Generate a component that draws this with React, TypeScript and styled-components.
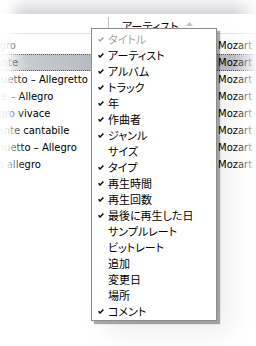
import React from 'react';
import styled, { createGlobalStyle } from 'styled-components';

const Global = createGlobalStyle`
  html, body { margin: 0; padding: 0; background: #fff; }
  body { width: 256px; height: 346px; overflow: hidden; }
`;

const Stage = styled.div`
  position: relative;
  width: 256px;
  height: 346px;
  overflow: hidden;
  background: #fff;
  font-family: "DejaVu Sans", sans-serif;
`;

const TopBand = styled.div`
  height: 14px;
  background: linear-gradient(#f5f5f7, #d6d6dc);
`;

const Header = styled.div`
  display: flex;
  height: 19px;
  border-bottom: 1px solid #e2e2e4;
`;

const HeaderBlank = styled.div`
  width: 108px;
`;

const HeaderDivider = styled.div`
  width: 1px;
  margin-top: 3px;
  background: #c4c4c4;
`;

const HeaderLabel = styled.div`
  display: flex;
  align-items: flex-start;
  padding: 6px 0 0 13px;
  font-family: "Noto Sans CJK JP", sans-serif;
  font-feature-settings: "palt";
  font-size: 11px;
  line-height: 13px;
  color: #000;
`;

const SortArrow = styled.svg`
  margin: 2px 0 0 7px;
`;

const Rows = styled.div`
  padding-top: 3px;
`;

const Row = styled.div<{ $selected?: boolean }>`
  display: grid;
  grid-template-columns: 218px 1fr;
  align-items: center;
  box-sizing: border-box;
  height: 17px;
  font-size: 10px;
  color: #000;
  background: ${p => (p.$selected ? 'linear-gradient(to right, #d0d1d6, #b9bbc2 90px, #c2c5cc)' : 'transparent')};
  border-top: 1px dotted ${p => (p.$selected ? '#555' : 'transparent')};
  border-bottom: 1px dotted ${p => (p.$selected ? '#555' : 'transparent')};
`;

const TitleCell = styled.div<{ $indent: number }>`
  overflow: hidden;
  white-space: nowrap;
  text-indent: ${p => p.$indent}px;
`;

const ArtistCell = styled.div`
  white-space: nowrap;
`;

const FadeLeft = styled.div`
  position: absolute;
  left: 0;
  top: 0;
  bottom: 0;
  width: 30px;
  z-index: 1;
  pointer-events: none;
  background: linear-gradient(
    to right,
    rgba(255, 255, 255, 0.97),
    rgba(255, 255, 255, 0.9) 7px,
    rgba(255, 255, 255, 0.55) 13px,
    rgba(255, 255, 255, 0.2) 20px,
    rgba(255, 255, 255, 0) 28px
  );
`;

const FadeRight = styled.div`
  position: absolute;
  right: 0;
  top: 0;
  bottom: 0;
  width: 22px;
  z-index: 1;
  pointer-events: none;
  background: linear-gradient(to right, rgba(255, 255, 255, 0), rgba(255, 255, 255, 0.9));
`;

const Menu = styled.div`
  position: absolute;
  left: 91px;
  top: 28px;
  width: 126px;
  box-sizing: border-box;
  z-index: 2;
  padding: 2px 0 1px;
  background: #fff;
  border: 1px solid #8c8c8c;
  box-shadow: 3px 3px 1px rgba(0, 0, 0, 0.33), 14px 12px 26px rgba(0, 0, 0, 0.07);
`;

const Item = styled.div<{ $disabled?: boolean }>`
  display: grid;
  grid-template-columns: 16px 1fr;
  align-items: center;
  height: 16px;
  font-family: "Noto Sans CJK JP", sans-serif;
  font-feature-settings: "palt";
  font-size: 11px;
  line-height: 16px;
  color: ${p => (p.$disabled ? '#a6a6a6' : '#000')};
`;

const CheckBox = styled.span`
  display: flex;
  justify-content: center;
  align-items: center;
  padding-left: 1px;
`;

const Check = ({ color }: { color: string }) => (
  <svg width="6" height="5" viewBox="0 0 6 5">
    <path d="M0.6 2.2 L2.1 4 L5.4 0.6" fill="none" stroke={color} strokeWidth="1.4" />
  </svg>
);

const rows = [
  { title: 'Allegro', indent: -19 },
  { title: 'Andante', indent: -24, selected: true },
  { title: 'Menuetto – Allegretto', indent: -20 },
  { title: 'Finale – Allegro', indent: -22 },
  { title: 'Allegro vivace', indent: -20 },
  { title: 'Andante cantabile', indent: -22 },
  { title: 'Menuetto – Allegro', indent: -17 },
  { title: 'Molto allegro', indent: -24 },
];

const items: { label: string; checked: boolean; disabled?: boolean }[] = [
  { label: 'タイトル', checked: true, disabled: true },
  { label: 'アーティスト', checked: true },
  { label: 'アルバム', checked: true },
  { label: 'トラック', checked: true },
  { label: '年', checked: true },
  { label: '作曲者', checked: true },
  { label: 'ジャンル', checked: true },
  { label: 'サイズ', checked: false },
  { label: 'タイプ', checked: true },
  { label: '再生時間', checked: true },
  { label: '再生回数', checked: true },
  { label: '最後に再生した日', checked: true },
  { label: 'サンプルレート', checked: false },
  { label: 'ビットレート', checked: false },
  { label: '追加', checked: false },
  { label: '変更日', checked: false },
  { label: '場所', checked: false },
  { label: 'コメント', checked: true },
];

export default function App() {
  return (
    <Stage>
      <Global />
      <TopBand />
      <Header>
        <HeaderBlank />
        <HeaderDivider />
        <HeaderLabel>
          アーティスト
          <SortArrow width="7" height="4" viewBox="0 0 7 4">
            <path d="M0 4 L3.5 0 L7 4 Z" fill="#c8c4b4" />
          </SortArrow>
        </HeaderLabel>
      </Header>
      <Rows>
        {rows.map((r, i) => (
          <Row key={i} $selected={r.selected}>
            <TitleCell $indent={r.indent}>{r.title}</TitleCell>
            <ArtistCell>Mozart</ArtistCell>
          </Row>
        ))}
      </Rows>
      <FadeLeft />
      <FadeRight />
      <Menu>
        {items.map((it, i) => (
          <Item key={i} $disabled={it.disabled}>
            <CheckBox>{it.checked && <Check color={it.disabled ? '#a6a6a6' : '#000'} />}</CheckBox>
            <span>{it.label}</span>
          </Item>
        ))}
      </Menu>
    </Stage>
  );
}
